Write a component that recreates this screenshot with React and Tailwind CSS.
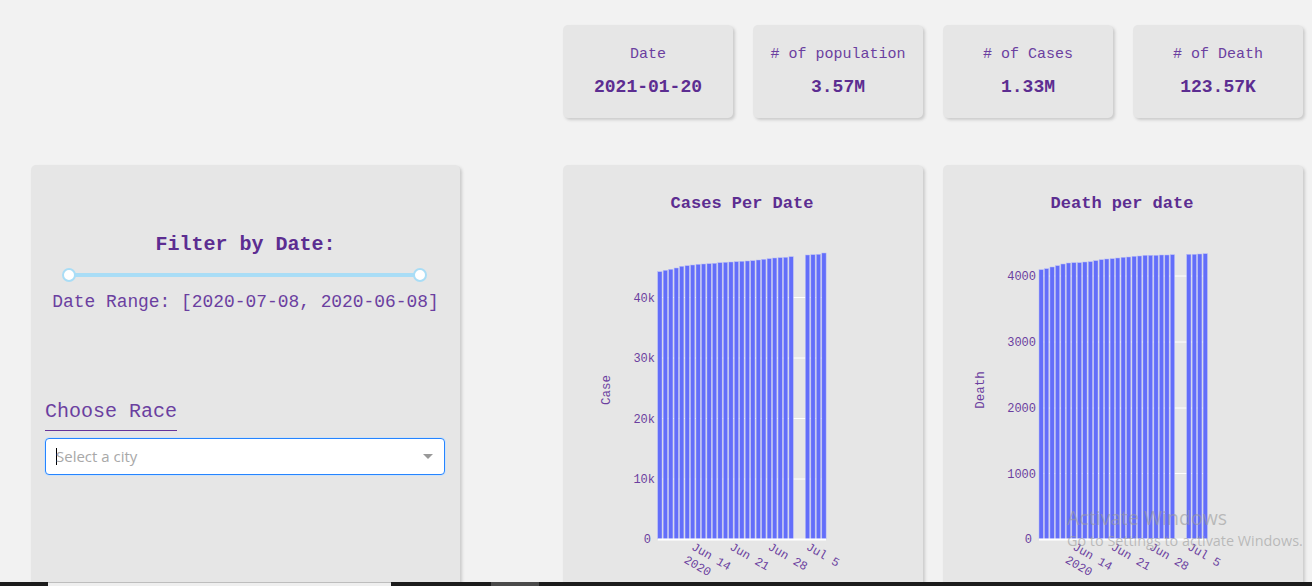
import React from "react";

const MONO = { fontFamily: '"Liberation Mono", "Courier New", monospace' };
const PURPLE = "#6b3fa0";

const casesH = [267.3, 268.7, 269.7, 271, 272.7, 273.3, 274, 274.7, 275, 275.3, 275.7, 276.3, 276.7, 277, 277.3, 277.7, 278, 278.3, 279, 279.7, 280.3, 281, 281.3, 281.7, 282.3, null, null, 284, 284.3, 284.7, 286];
const deathH = [269.3, 270.3, 272, 273.3, 275, 276, 276.3, 276.3, 277, 277.3, 278.3, 279.3, 280, 280.3, 281, 281.7, 282, 282.7, 283, 283.7, 283.7, 283.7, 284, 284, 284.3, null, null, 284.7, 284.7, 285, 285.3];

function StatCard({ label, value }) {
  return (
    <div className="w-[170px] h-[93px] rounded-[5px] bg-[#e6e6e6] shadow-[2px_2px_3px_#cbcbcb] flex flex-col items-center pt-[21px]" style={MONO}>
      <div className="text-[15px] leading-[18px] text-[#6b3fa0]">{label}</div>
      <div className="mt-[12px] text-[18px] leading-[22px] font-bold text-[#5c2d91]">{value}</div>
    </div>
  );
}

function Chart({ title, axisTitle, x0, labelX, axisX, heights, grid }) {
  const pitch = 5.47;
  const bw = 4.3;
  const base = 374;
  const x1 = x0 + 31 * pitch - 1.2;
  const ticks = [
    { s: 6, t: "Jun 14", sub: "2020" },
    { s: 13, t: "Jun 21" },
    { s: 20, t: "Jun 28" },
    { s: 27, t: "Jul 5" },
  ];
  return (
    <div className="w-[360px] h-[430px] rounded-[5px] bg-[#e6e6e6] shadow-[2px_2px_3px_#cbcbcb]">
      <svg width="360" height="430" style={MONO}>
        <text x="179" y="43" textAnchor="middle" fontSize="17" fontWeight="bold" fill="#5c2d91">{title}</text>
        {grid.map((g) => (
          <g key={g.label}>
            <line x1={x0} x2={x1} y1={g.y} y2={g.y} stroke="#ffffff" strokeWidth="1" />
            <text x={labelX} y={g.y + 4} textAnchor="end" fontSize="12" fill={PURPLE}>{g.label}</text>
          </g>
        ))}
        <text x={labelX - 4} y={base + 4} textAnchor="end" fontSize="12" fill={PURPLE}>0</text>
        <text transform={`translate(${axisX},225) rotate(-90)`} textAnchor="middle" fontSize="12.5" fill={PURPLE}>{axisTitle}</text>
        {heights.map((h, i) =>
          h == null ? null : (
            <rect key={i} x={x0 + i * pitch} y={base - h} width={bw} height={h} fill="#636efa" stroke="#b9bdf8" strokeWidth="0.5" />
          )
        )}
        <line x1={x0} x2={x1} y1={base + 0.5} y2={base + 0.5} stroke="#ffffff" strokeWidth="2" />
        {ticks.map((tk) => {
          const cx = x0 + tk.s * pitch + bw / 2;
          return (
            <text key={tk.t} transform={`translate(${cx - 2},${base + 10}) rotate(30)`} fontSize="12" fill={PURPLE}>
              {tk.t}
              {tk.sub ? (
                <tspan x="0" dy="15">{tk.sub}</tspan>
              ) : null}
            </text>
          );
        })}
      </svg>
    </div>
  );
}

export default function App() {
  return (
    <div className="w-[1312px] h-[586px] overflow-hidden bg-[#f2f2f2] flex flex-col relative">
      <div className="h-[582px] overflow-hidden flex flex-col">
        <div className="pt-[25px] pl-[563px] flex gap-[20px]">
          <StatCard label="Date" value="2021-01-20" />
          <StatCard label="# of population" value="3.57M" />
          <StatCard label="# of Cases" value="1.33M" />
          <StatCard label="# of Death" value="123.57K" />
        </div>
        <div className="mt-[47px] pl-[31px] flex">
          <div className="w-[429px] h-[430px] rounded-[5px] bg-[#e6e6e6] shadow-[2px_2px_3px_#cbcbcb] flex flex-col pl-[14px]" style={MONO}>
            <div className="mt-[68px] pr-[14px] text-center text-[20px] leading-[24px] font-bold text-[#5c2d91]">Filter by Date:</div>
            <div className="mt-[11px] ml-[17px] w-[365px] h-[14px] relative">
              <div className="absolute left-[7px] right-[7px] top-[5px] h-[4px] bg-[#a9ddf6]" />
              <div className="absolute left-0 top-0 w-[14px] h-[14px] rounded-full bg-white border-2 border-[#a9ddf6]" />
              <div className="absolute right-0 top-0 w-[14px] h-[14px] rounded-full bg-white border-2 border-[#a9ddf6]" />
            </div>
            <div className="mt-[10px] pr-[14px] text-center text-[17.9px] leading-[20px] text-[#6b3fa0] whitespace-nowrap">Date Range: [2020-07-08, 2020-06-08]</div>
            <div className="mt-[88px] self-start text-[20px] leading-[24px] text-[#6b3fa0] pb-[6px] border-b border-[#663399] whitespace-nowrap">Choose Race</div>
            <div className="mt-[7px] w-[400px] h-[37px] bg-white rounded-[4px] border border-[#2684ff] shadow-[0_0_0_1px_#cfe3f7] flex items-center pl-[10px] pr-[10px]" style={{ fontFamily: '"Open Sans", sans-serif' }}>
              <div className="w-px h-[17px] bg-black" />
              <div className="text-[15px] text-[#a8a8a8] -ml-px">Select a city</div>
              <div className="ml-auto mr-[1px] w-0 h-0 border-l-[5px] border-r-[5px] border-t-[5px] border-l-transparent border-r-transparent border-t-[#999999]" />
            </div>
          </div>
          <div className="ml-[103px] flex gap-[20px]">
            <Chart
              title="Cases Per Date"
              axisTitle="Case"
              x0={94.7}
              labelX={92}
              axisX={47}
              heights={casesH}
              grid={[
                { y: 314, label: "10k" },
                { y: 253.5, label: "20k" },
                { y: 193, label: "30k" },
                { y: 132.5, label: "40k" },
              ]}
            />
            <Chart
              title="Death per date"
              axisTitle="Death"
              x0={96}
              labelX={93}
              axisX={41}
              heights={deathH}
              grid={[
                { y: 308.5, label: "1000" },
                { y: 243, label: "2000" },
                { y: 177, label: "3000" },
                { y: 111, label: "4000" },
              ]}
            />
          </div>
        </div>
      </div>
      <div className="h-[4px] bg-[#1c1c1c] flex">
        <div className="ml-[48px] w-[343px] bg-[#efefef] border-t border-[#bdbdbd]" />
        <div className="ml-[100px] w-[48px] bg-[#4a4a4a]" />
      </div>
      <div className="absolute left-[1067px] top-[505px] pointer-events-none" style={{ fontFamily: '"Open Sans", sans-serif' }}>
        <div className="text-[19.5px] leading-[26px] text-[#9a9a9a99]">Activate Windows</div>
        <div className="text-[14.4px] leading-[19px] text-[#9a9a9a99] whitespace-nowrap">Go to Settings to activate Windows.</div>
      </div>
    </div>
  );
}
